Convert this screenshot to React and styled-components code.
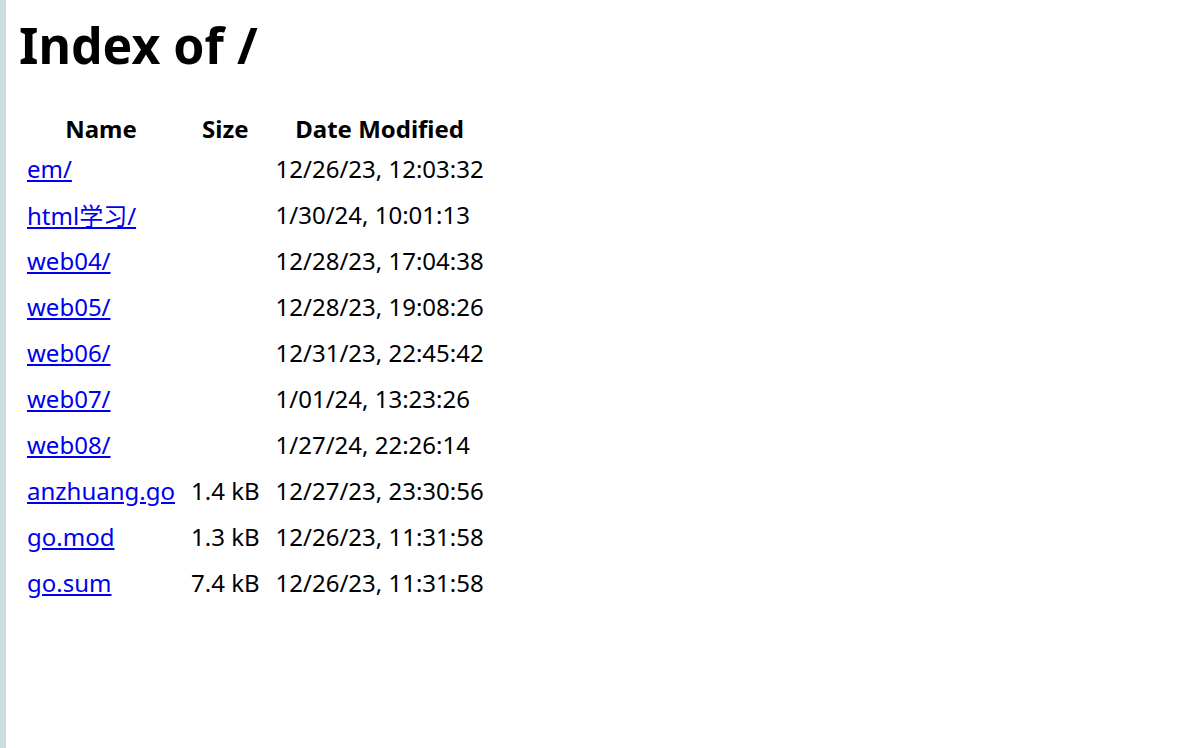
import styled, { createGlobalStyle } from "styled-components";

const files = [
  { name: "em/", size: "", date: "12/26/23, 12:03:32" },
  { name: "html学习/", size: "", date: "1/30/24, 10:01:13" },
  { name: "web04/", size: "", date: "12/28/23, 17:04:38" },
  { name: "web05/", size: "", date: "12/28/23, 19:08:26" },
  { name: "web06/", size: "", date: "12/31/23, 22:45:42" },
  { name: "web07/", size: "", date: "1/01/24, 13:23:26" },
  { name: "web08/", size: "", date: "1/27/24, 22:26:14" },
  { name: "anzhuang.go", size: "1.4 kB", date: "12/27/23, 23:30:56" },
  { name: "go.mod", size: "1.3 kB", date: "12/26/23, 11:31:58" },
  { name: "go.sum", size: "7.4 kB", date: "12/26/23, 11:31:58" },
];

const GlobalStyle = createGlobalStyle`
  html, body {
    margin: 0;
    background: #ffffff;
  }
  body {
    font-family: "Noto Sans", "Noto Sans CJK SC", sans-serif;
    color: #000;
  }
`;

const Page = styled.div`
  min-height: 748px;
  box-sizing: border-box;
  border-left: 6px solid #c9dee3;
  padding: 14px 0 0 13px;
`;

const Title = styled.h1`
  margin: 0 0 36px;
  font-size: 50px;
  font-weight: 700;
  line-height: 62px;
`;

const Table = styled.table`
  border-collapse: collapse;
  border-spacing: 0;
  font-size: 24px;
`;

const Head = styled.th`
  font-weight: 700;
  padding: 0 8px;
  height: 28px;
  vertical-align: top;
  text-align: center;
`;

const Cell = styled.td`
  height: 46px;
  padding: 0 8px;
  white-space: nowrap;
  text-align: ${(p) => p.$align || "left"};
`;

const Link = styled.a`
  color: #0000ee;
  text-decoration: underline;
`;

const App = () => (
  <Page>
    <GlobalStyle />
    <Title>Index of /</Title>
    <Table>
      <thead>
        <tr>
          <Head>Name</Head>
          <Head>Size</Head>
          <Head>Date Modified</Head>
        </tr>
      </thead>
      <tbody>
        {files.map((file) => (
          <tr key={file.name}>
            <Cell>
              <Link href="#">{file.name}</Link>
            </Cell>
            <Cell $align="right">{file.size}</Cell>
            <Cell>{file.date}</Cell>
          </tr>
        ))}
      </tbody>
    </Table>
  </Page>
);

export default App;
